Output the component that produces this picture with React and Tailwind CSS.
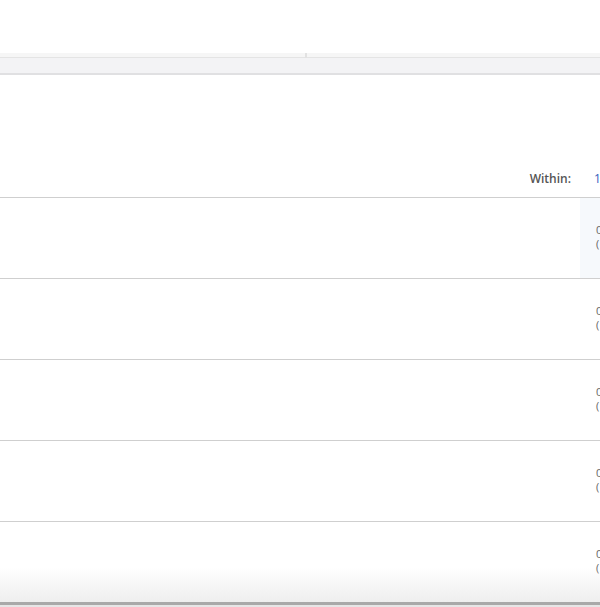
export default function App() {
  const rows = [0, 1, 2, 3, 4];
  return (
    <div className="relative w-[600px] h-[607px] overflow-hidden bg-white" style={{ fontFamily: '"Open Sans", "Liberation Sans", sans-serif' }}>
      <div className="h-[53px] bg-white" />
      <div className="relative h-[5px] bg-[#f6f6f6] border-b border-[#e4e4e4]">
        <div className="absolute left-[305px] top-0 w-[2px] h-[5px] bg-[#e2e2e2]" />
      </div>
      <div className="h-[17px] bg-[#f3f3f5] border-b-2 border-[#e0e0e2]" />
      <div className="h-[122px] flex items-end justify-end pb-[10px]">
        <span className="text-[12px] leading-[16px] font-semibold text-[#555]">Within:</span>
        <span className="ml-[23px] w-[6px] overflow-hidden text-[12px] leading-[16px] text-[#3560bd]">1</span>
      </div>
      {rows.map((r) => (
        <div key={r} className="flex h-[81px] border-t border-[#cfcfcf]">
          <div className="flex-1" />
          <div className={`w-[20px] pl-[16px] pt-[25px] text-[11px] leading-[14px] text-[#666] overflow-hidden ${r === 0 ? 'bg-[#f6f9fc]' : ''}`}>
            <div>0</div>
            <div>(</div>
          </div>
        </div>
      ))}
      <div className="absolute left-0 right-0 bottom-0 h-[40px] bg-gradient-to-b from-transparent to-[#ececec]" />
      <div className="absolute left-0 right-0 bottom-[2px] h-[3px] bg-[#a9a9a9]" />
      <div className="absolute left-0 right-0 bottom-0 h-[2px] bg-[#e6e6e6]" />
    </div>
  );
}
